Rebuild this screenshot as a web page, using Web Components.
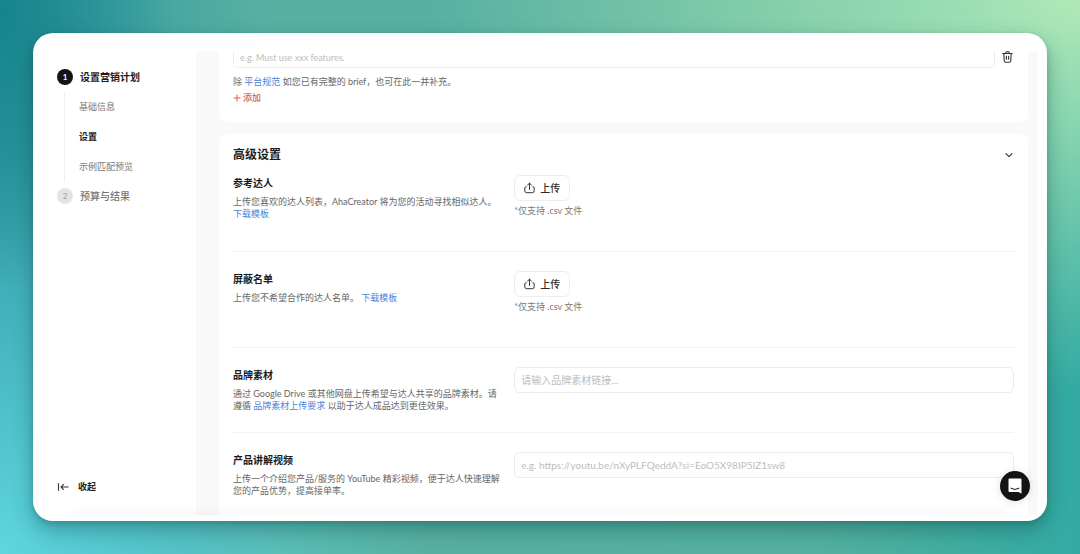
<!DOCTYPE html>
<html lang="zh-CN">
<head>
<meta charset="utf-8">
<meta name="viewport" content="width=device-width, initial-scale=1">
<title>设置营销计划</title>
<style>
  body {
    margin: 0;
    font-family: Lato, "Noto Sans CJK SC", sans-serif;
    font-size: 9px;
    line-height: 12px;
    color: #1c1c1c;
    --link: #4b83d8;
    --muted: #666;
    --line: #f2f2f2;
    --field: #ededed;
  }
</style>
</head>
<body>
<campaign-app>
  <side-nav slot="nav">
    <nav-step number="1" active label="设置营销计划">
      <nav-item>基础信息</nav-item>
      <nav-item current>设置</nav-item>
      <nav-item>示例匹配预览</nav-item>
    </nav-step>
    <nav-step number="2" label="预算与结果"></nav-step>
  </side-nav>
  <brief-panel></brief-panel>
  <settings-panel heading="高级设置">
    <setting-row heading="参考达人">
      上传您喜欢的达人列表，AhaCreator 将为您的活动寻找相似达人。 <text-link>下载模板</text-link>
      <upload-field slot="control"></upload-field>
    </setting-row>
    <setting-row heading="屏蔽名单">
      上传您不希望合作的达人名单。 <text-link>下载模板</text-link>
      <upload-field slot="control"></upload-field>
    </setting-row>
    <setting-row heading="品牌素材">
      通过 Google Drive 或其他网盘上传希望与达人共享的品牌素材。请遵循 <text-link>品牌素材上传要求</text-link> 以助于达人成品达到更佳效果。
      <link-field slot="control" label="品牌素材" placeholder="请输入品牌素材链接..."></link-field>
    </setting-row>
    <setting-row heading="产品讲解视频">
      上传一个介绍您产品/服务的 YouTube 精彩视频，便于达人快速理解您的产品优势，提高接单率。
      <link-field slot="control" label="产品讲解视频" placeholder="e.g. https://youtu.be/nXyPLFQeddA?si=EoO5X98IP5IZ1sw8"></link-field>
    </setting-row>
  </settings-panel>
  <chat-launcher slot="chat"></chat-launcher>
</campaign-app>

<script>
const define = (name, render) => customElements.define(name, class extends HTMLElement {
  constructor() {
    super();
    this.attachShadow({ mode: "open" });
  }
  connectedCallback() {
    this.shadowRoot.innerHTML = render(this);
  }
});

define("campaign-app", () => `
  <style>
    :host {
      display: flex; box-sizing: border-box; height: 100vh; padding: 33px;
      background:
        radial-gradient(ellipse 16% 50% at 0% 2%, #16858b 0%, #16858b00 100%),
        radial-gradient(ellipse 60% 70% at 100% 0%, #b0e9b6 0%, #a4e2b400 100%),
        radial-gradient(ellipse 40% 75% at 0% 100%, #5ed5df 0%, #5ed5df00 100%),
        linear-gradient(to right, #2f98a2 0%, #58b0a2 25%, #55b09f 75%, #32aaa3 100%);
    }
    .window {
      position: relative; flex: 1; min-width: 0; display: flex; box-sizing: border-box;
      padding: 18px 9px 6px 0; border-radius: 20px; background: #fff;
      box-shadow: 0 9px 20px #0a4a4866, 0 2px 5px #0a4a4833;
    }
    main {
      flex: 1; min-width: 0; display: flex; flex-direction: column; gap: 12px;
      box-sizing: border-box; padding: 0 10px 0 23px; overflow: hidden;
      background: #f9f9f9; border-radius: 0 4px 0 0;
    }
    .fade {
      position: absolute; left: 40px; right: 40px; bottom: 6px; height: 12px;
      background: linear-gradient(#0000, #00000006); pointer-events: none;
    }
  </style>
  <div class="window">
    <slot name="nav"></slot>
    <main><slot></slot></main>
    <div class="fade"></div>
    <slot name="chat"></slot>
  </div>`);

define("side-nav", () => `
  <style>
    :host {
      display: flex; flex-direction: column; justify-content: space-between;
      flex: none; width: 163px; box-sizing: border-box; padding: 18px 0 20px 24px;
    }
    button {
      display: flex; align-items: center; gap: 9px; height: 16px; padding: 0; border: 0;
      background: none; font: inherit; font-weight: 700; color: inherit; align-self: flex-start;
    }
  </style>
  <nav><slot></slot></nav>
  <button type="button">
    <svg width="12" height="10" viewBox="0 0 12 10" fill="none" stroke="#333" stroke-width="1.1">
      <path d="M1.5 1.2v7.6M11.5 5H4M6.8 2.2 4 5l2.8 2.8"/>
    </svg>
    收起
  </button>`);

define("nav-step", el => `
  <style>
    :host { display: block; }
    .head { display: flex; align-items: center; gap: 7px; font-size: 10px; line-height: 16px; font-weight: 500; color: #777; }
    .num {
      width: 16px; height: 16px; border-radius: 50%; text-align: center;
      font-size: 8px; background: #e4e4e4; color: #a5a5a5;
    }
    :host([active]) .head { font-weight: 700; color: #1c1c1c; }
    :host([active]) .num { background: #141414; color: #fff; }
    .items { display: flex; flex-direction: column; margin: 7px 0 6px 7px; padding-left: 14px; border-left: 1px solid #f0f0f0; }
    :host(:not([active])) .items { display: none; }
  </style>
  <div class="head"><span class="num">${el.getAttribute("number")}</span><span>${el.getAttribute("label")}</span></div>
  <div class="items"><slot></slot></div>`);

define("nav-item", () => `
  <style>
    :host { display: block; }
    a { display: block; line-height: 30px; color: #777; text-decoration: none; }
    :host([current]) a { color: #1c1c1c; font-weight: 700; }
  </style>
  <a href="#"><slot></slot></a>`);

define("text-link", () => `
  <style>
    :host { display: inline-block; }
    a { color: var(--link); text-decoration: none; }
  </style>
  <a href="#"><slot></slot></a>`);

define("brief-panel", () => `
  <style>
    :host {
      display: block; flex: none; box-sizing: border-box; padding: 0 14px 18px;
      border-radius: 0 0 8px 8px; background: #fff;
    }
    .field { display: flex; align-items: flex-start; gap: 6px; }
    input {
      flex: 1; min-width: 0; box-sizing: border-box; height: 17px; padding: 0 6px 3px;
      border: 1px solid var(--field); border-top: 0; border-radius: 0 0 5px 5px;
      background: #fff; font: inherit; color: inherit; outline: 0;
    }
    input::placeholder { color: #bdbdbd; opacity: 1; }
    button { display: flex; align-items: center; padding: 0; border: 0; background: none; font: inherit; }
    p { margin: 8px 0 4px; color: var(--muted); }
    .add { gap: 2px; height: 12px; font-weight: 500; color: #d9622b; }
  </style>
  <div class="field">
    <input type="text" aria-label="Brief" placeholder="e.g. Must use xxx features.">
    <button type="button" aria-label="删除">
      <svg width="13" height="12" viewBox="0 0 13 12" fill="none" stroke="#333" stroke-width="1.1" stroke-linecap="round" stroke-linejoin="round">
        <path d="M1.8 2.5h9.4M4.6 2.3 5.1.8h2.8l.5 1.5M2.8 2.7l.5 7.3q.1 1.2 1.3 1.2h3.8q1.2 0 1.3-1.2l.5-7.3M5.4 5.3v3M7.6 5.3v3"/>
      </svg>
    </button>
  </div>
  <p>除 <text-link>平台规范</text-link> 如您已有完整的 brief，也可在此一并补充。</p>
  <button class="add" type="button">
    <svg width="8" height="8" viewBox="0 0 8 8" fill="none" stroke="currentColor"><path d="M4 .5v7M.5 4h7"/></svg>
    添加
  </button>`);

define("settings-panel", el => `
  <style>
    :host {
      display: block; flex: 1 0 auto; box-sizing: border-box; padding: 13px 14px 0;
      border-radius: 8px 8px 0 0; background: #fff;
    }
    header { display: flex; align-items: center; justify-content: space-between; margin-bottom: 12px; }
    h2 { margin: 0; font-size: 12px; line-height: 16px; font-weight: 700; }
    button { display: flex; padding: 0; border: 0; background: none; }
  </style>
  <header>
    <h2>${el.getAttribute("heading")}</h2>
    <button type="button" aria-label="折叠">
      <svg width="10" height="10" viewBox="0 0 10 10" fill="none" stroke="#333" stroke-width="1.1" stroke-linecap="round" stroke-linejoin="round"><path d="M2 3.6 5 6.6l3-3"/></svg>
    </button>
  </header>
  <slot></slot>`);

define("setting-row", el => `
  <style>
    :host {
      display: grid; grid-template-columns: 9fr 16fr; padding-bottom: 20px;
      margin-bottom: 19px; border-bottom: 1px solid var(--line);
    }
    :host(:last-child) { margin-bottom: 0; border-bottom: 0; }
    .text { padding-right: 12px; }
    h3 { margin: 0 0 5px; font-size: 10px; line-height: 16px; font-weight: 700; }
    p { margin: 0; color: var(--muted); }
  </style>
  <div class="text"><h3>${el.getAttribute("heading")}</h3><p><slot></slot></p></div>
  <slot name="control"></slot>`);

define("upload-field", () => `
  <style>
    :host { display: flex; flex-direction: column; align-items: flex-start; gap: 4px; min-height: 56px; }
    button {
      display: flex; align-items: center; gap: 5px; height: 26px; padding: 0 9px;
      border: 1px solid var(--field); border-radius: 6px; background: #fff;
      font: inherit; font-size: 10px; font-weight: 500; color: #2b2b2b;
    }
    span { color: #777; }
  </style>
  <button type="button" aria-describedby="hint">
    <svg width="11" height="12" viewBox="0 0 11 12" fill="none" stroke="#333" stroke-width="1" stroke-linecap="round" stroke-linejoin="round">
      <path d="M5.5 7.4V1.3M3.6 3l1.9-1.800L7.400 3M2.200 4.800H1.800q-1 0-1 1v3.100q0 1.800 1.800 1.800h5.800q1.800 0 1.800-1.800V5.800q0-1-1-1h-.4"/>
    </svg>
    上传
  </button>
  <span id="hint">*仅支持 .csv 文件</span>`);

define("link-field", el => `
  <style>
    :host { display: block; min-height: 45px; }
    input {
      display: block; width: 100%; box-sizing: border-box; height: 26px; padding: 0 6px;
      border: 1px solid var(--field); border-radius: 5px; background: #fff;
      font: inherit; font-size: 10px; color: inherit; outline: 0;
    }
    input::placeholder { color: #bdbdbd; opacity: 1; }
  </style>
  <input type="url" aria-label="${el.getAttribute("label")}" placeholder="${el.getAttribute("placeholder")}">`);

define("chat-launcher", () => `
  <style>
    :host { position: absolute; right: 17px; bottom: 20px; }
    button {
      display: grid; place-items: center; width: 30px; height: 30px; padding: 0; border: 0;
      border-radius: 50%; background: #141414; box-shadow: 0 1px 10px #0000001f;
    }
  </style>
  <button type="button" aria-label="客服">
    <svg width="14" height="16" viewBox="0 0 14 16">
      <path fill="#fff" d="M1.500.5h11q1 0 1 1v14l-3.200-1.500H1.500q-1 0-1-1v-11.500q0-1 1-1z"/>
      <path fill="none" stroke="#141414" stroke-width="1" stroke-linecap="round" d="M3 10.300q4 2.600 8 0"/>
    </svg>
  </button>`);
</script>
</body>
</html>
